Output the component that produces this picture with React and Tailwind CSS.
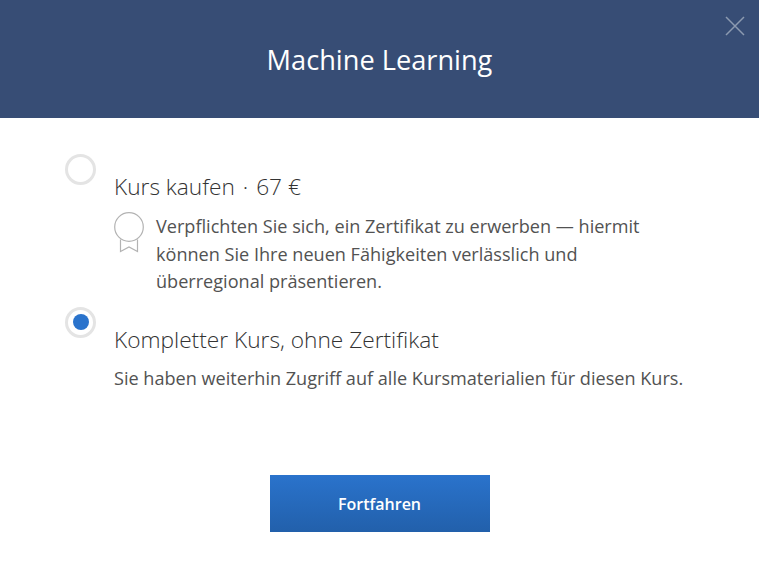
const CloseIcon = () => (
  <svg width="20" height="20" viewBox="0 0 20 20" fill="none" stroke="#8c9ab0" strokeWidth="1.5">
    <path d="M1 1l18 18M19 1L1 19" />
  </svg>
);

const RibbonIcon = () => (
  <svg width="30" height="42" viewBox="0 0 30 42" fill="none" stroke="#b3b3b3" strokeWidth="1.2">
    <circle cx="15" cy="15" r="14.3" />
    <path d="M6.5 27.5v12l8.5-4.5 8.5 4.5v-12" />
  </svg>
);

const Radio = ({ checked }) => (
  <div className="w-[31px] h-[31px] shrink-0 rounded-full border-[3px] border-[#e4e4e4] bg-white flex items-center justify-center">
    {checked && <div className="w-[16px] h-[16px] rounded-full bg-[#2a73cc]" />}
  </div>
);

export default function App() {
  return (
    <div className="w-[759px] h-[563px] bg-white overflow-hidden font-['Open_Sans',sans-serif] relative">
      <div className="h-[118px] bg-[#374d75] flex items-center justify-center">
        <h1 className="text-[27.2px] leading-[38px] mt-[2px] text-white">Machine Learning</h1>
      </div>
      <button className="absolute top-[16px] right-[14px]" aria-label="Close">
        <CloseIcon />
      </button>

      <div className="pl-[65px] pr-[60px] pt-[36px]">
        <div className="flex">
          <Radio />
          <div className="ml-[18px] pt-[17px]">
            <div className="text-[22.7px] leading-[32px] font-light text-[#333]">
              Kurs kaufen <span className="mx-[2px]">·</span> 67 €
            </div>
            <div className="flex mt-[8px]">
              <div className="w-[30px] shrink-0 mt-[1px]">
                <RibbonIcon />
              </div>
              <p className="ml-[12px] w-[520px] text-[18.1px] leading-[27.5px] pt-[2px] text-[#525252]">
                Verpflichten Sie sich, ein Zertifikat zu erwerben — hiermit können Sie Ihre neuen Fähigkeiten verlässlich und überregional präsentieren.
              </p>
            </div>
          </div>
        </div>

        <div className="flex mt-[11px]">
          <Radio checked />
          <div className="ml-[18px] pt-[17px]">
            <div className="text-[22.7px] leading-[32px] font-light text-[#333]">
              Kompletter Kurs, ohne Zertifikat
            </div>
            <p className="mt-[9px] text-[18.1px] leading-[27.5px] text-[#525252] whitespace-nowrap">
              Sie haben weiterhin Zugriff auf alle Kursmaterialien für diesen Kurs.
            </p>
          </div>
        </div>
      </div>

      <div className="flex justify-center mt-[83px]">
        <button className="w-[220px] h-[57px] bg-gradient-to-b from-[#2a73cc] to-[#2260ab] text-white text-[16px] font-semibold">
          Fortfahren
        </button>
      </div>
    </div>
  );
}
